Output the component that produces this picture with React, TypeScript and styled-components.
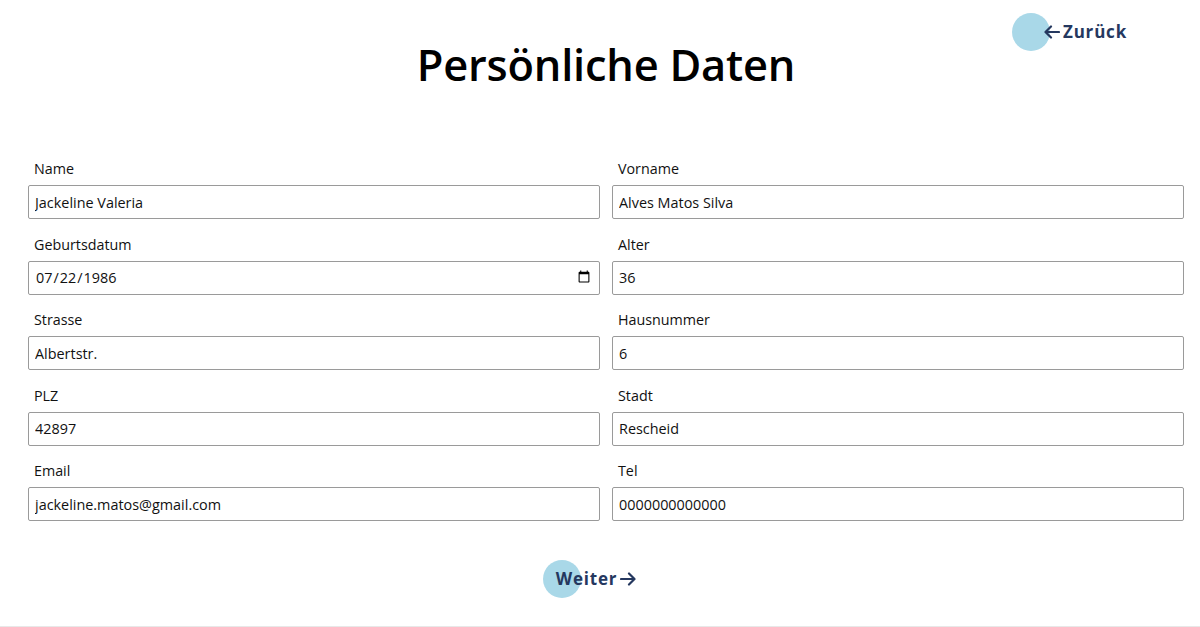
import React, { useState } from "react";
import styled, { createGlobalStyle } from "styled-components";

const GlobalStyle = createGlobalStyle`
  html, body { margin: 0; padding: 0; background: #fff; }
  body { font-family: "Open Sans", "Noto Sans", sans-serif; color: #111; }
  * { box-sizing: border-box; }
`;

const Page = styled.div`
  width: 1200px;
  height: 627px;
  border-bottom: 1px solid #e8e8e8;
  display: flex;
  flex-direction: column;
`;

const Header = styled.header`
  display: grid;
  grid-template-columns: 1fr auto 1fr;
  align-items: start;
  padding: 0 0 0 12px;
  height: 150px;
`;

const Title = styled.h1`
  grid-column: 2;
  margin: 35px 0 0;
  font-size: 43.4px;
  font-weight: 600;
  letter-spacing: -0.2px;
  color: #000;
`;

const NavButton = styled.button<{ $circle: number }>`
  position: relative;
  display: inline-flex;
  align-items: center;
  gap: 3px;
  background: none;
  border: none;
  padding: 0;
  font-family: "Open Sans", sans-serif;
  font-weight: 700;
  font-size: 17px;
  letter-spacing: 0.8px;
  color: #25385f;
  cursor: pointer;
  z-index: 0;
  &::before {
    content: "";
    position: absolute;
    left: ${(p) => p.$circle}px;
    top: 50%;
    width: 38px;
    height: 38px;
    margin-top: -19px;
    border-radius: 50%;
    background: #a9d8e8;
    z-index: -1;
  }
`;

const BackWrap = styled.div`
  grid-column: 3;
  justify-self: end;
  margin: 20px 73px 0 0;
`;

const Form = styled.form`
  display: grid;
  grid-template-columns: 1fr 1fr;
  column-gap: 12px;
  row-gap: 14.5px;
  padding: 8px 16px 0 28px;
`;

const Field = styled.label`
  display: flex;
  flex-direction: column;
  gap: 6px;
`;

const LabelText = styled.span`
  font-size: 14.3px;
  line-height: 21px;
  padding-left: 6px;
  color: #111;
`;

const Input = styled.input`
  height: 34px;
  width: 100%;
  border: 1px solid #9a9a9a;
  border-radius: 2px;
  padding: 0 6px;
  font-family: "Open Sans", sans-serif;
  font-size: 14.4px;
  color: #111;
  background: #fff;
  outline: none;
`;

const Footer = styled.div`
  display: flex;
  justify-content: center;
  padding: 46px 8px 0 0;
`;

const Arrow = ({ dir }: { dir: "left" | "right" }) => (
  <svg width="16" height="14" viewBox="0 0 16 14" fill="none" stroke="#25385f" strokeWidth="2.2" strokeLinecap="round" strokeLinejoin="round">
    {dir === "left" ? (
      <>
        <path d="M15 7H2" />
        <path d="M7 1.5L1.5 7L7 12.5" />
      </>
    ) : (
      <>
        <path d="M1 7H14" />
        <path d="M9 1.5L14.5 7L9 12.5" />
      </>
    )}
  </svg>
);

const fields: { label: string; value: string; type?: string }[] = [
  { label: "Name", value: "Jackeline Valeria" },
  { label: "Vorname", value: "Alves Matos Silva" },
  { label: "Geburtsdatum", value: "1986-07-22", type: "date" },
  { label: "Alter", value: "36" },
  { label: "Strasse", value: "Albertstr." },
  { label: "Hausnummer", value: "6" },
  { label: "PLZ", value: "42897" },
  { label: "Stadt", value: "Rescheid" },
  { label: "Email", value: "jackeline.matos@gmail.com" },
  { label: "Tel", value: "0000000000000" },
];

export default function App() {
  const [values, setValues] = useState(fields.map((f) => f.value));
  return (
    <>
      <GlobalStyle />
      <Page>
        <Header>
          <Title>Persönliche Daten</Title>
          <BackWrap>
            <NavButton $circle={-32} type="button">
              <Arrow dir="left" />
              Zurück
            </NavButton>
          </BackWrap>
        </Header>
        <Form onSubmit={(e) => e.preventDefault()}>
          {fields.map((f, i) => (
            <Field key={f.label}>
              <LabelText>{f.label}</LabelText>
              <Input
                type={f.type ?? "text"}
                value={values[i]}
                onChange={(e) => {
                  const next = [...values];
                  next[i] = e.target.value;
                  setValues(next);
                }}
              />
            </Field>
          ))}
        </Form>
        <Footer>
          <NavButton $circle={-13} type="button">
            Weiter
            <Arrow dir="right" />
          </NavButton>
        </Footer>
      </Page>
    </>
  );
}
